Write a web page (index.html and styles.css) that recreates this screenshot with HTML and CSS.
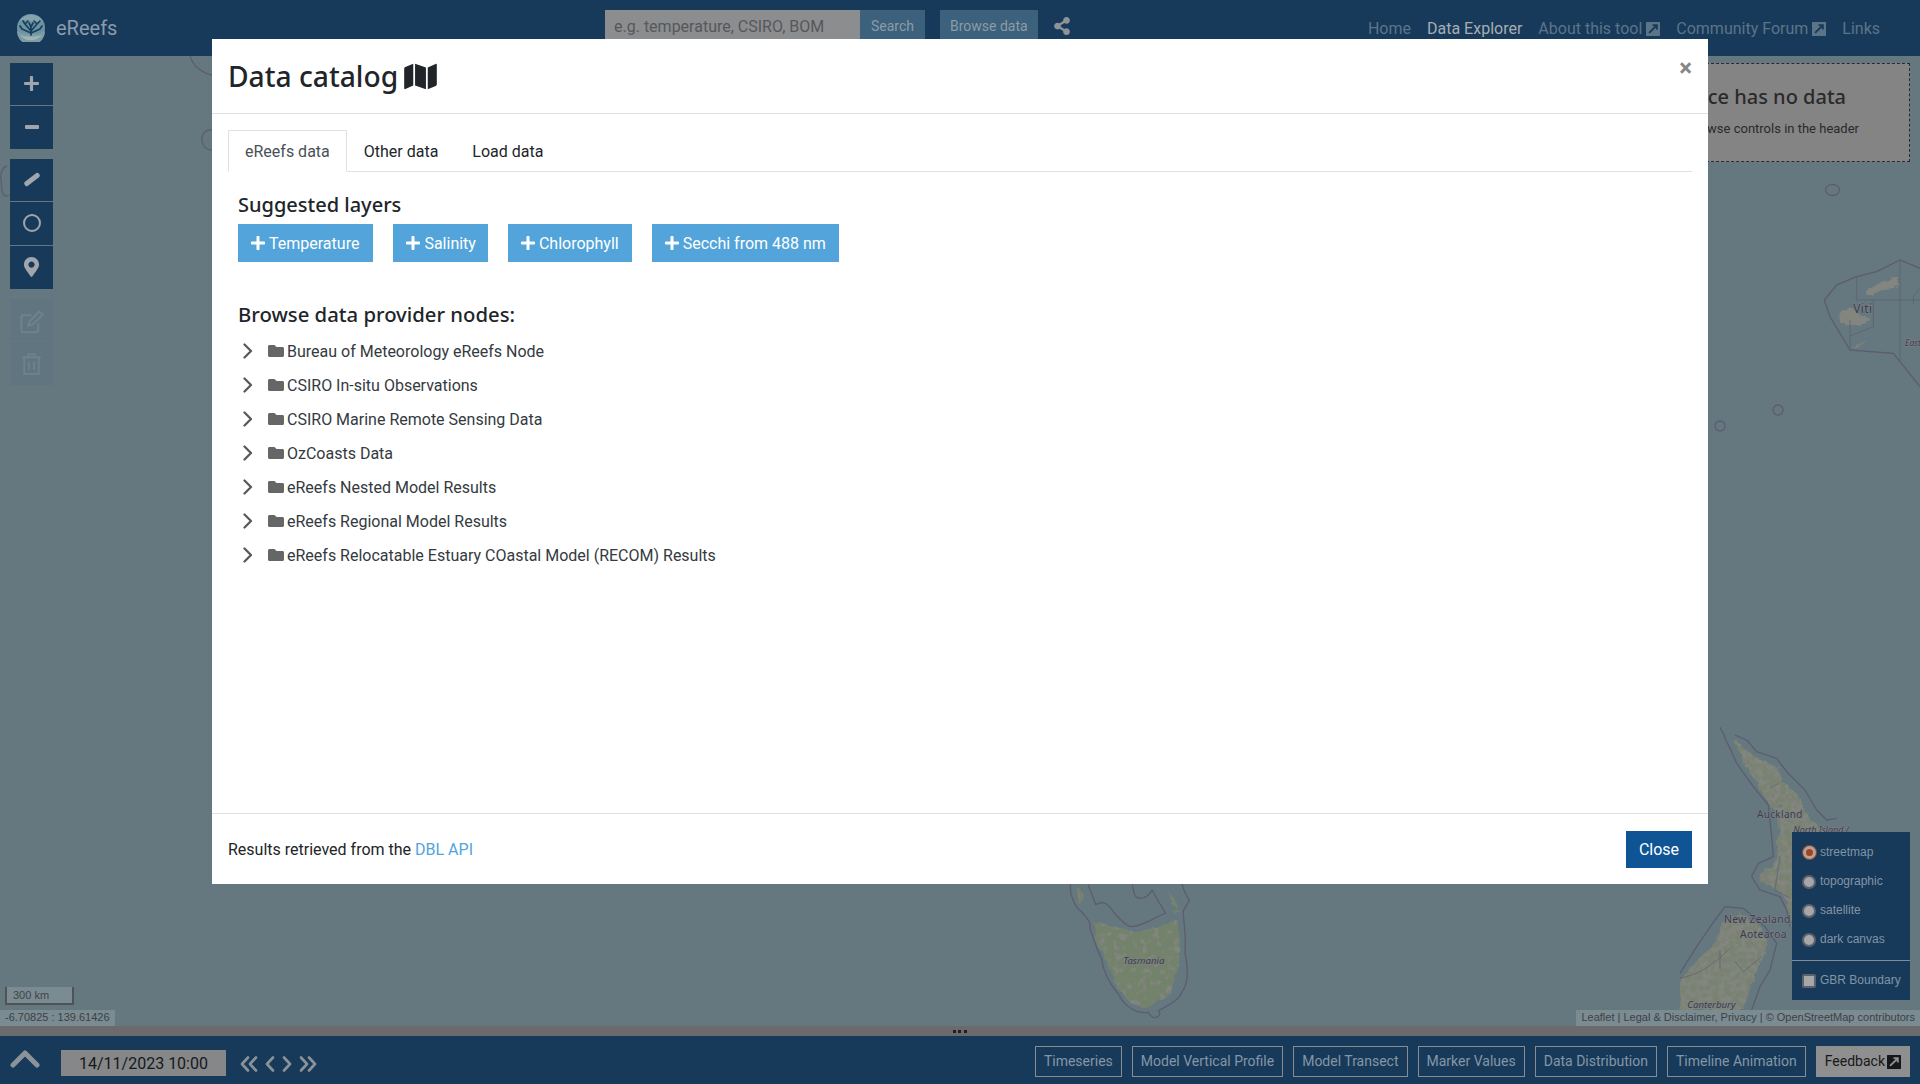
FILE: index.html
```html
<!DOCTYPE html>
<html lang="en">
<head>
<meta charset="utf-8">
<title>eReefs Data Explorer</title>
<link rel="stylesheet" href="styles.css">
</head>
<body>
<svg class="defs" width="0" height="0" aria-hidden="true">
  <symbol id="i-plus" viewBox="0 0 448 512"><path d="M416 208H272V64c0-17.67-14.33-32-32-32h-32c-17.67 0-32 14.33-32 32v144H32c-17.67 0-32 14.33-32 32v32c0 17.67 14.33 32 32 32h144v144c0 17.67 14.33 32 32 32h32c17.67 0 32-14.33 32-32V304h144c17.67 0 32-14.33 32-32v-32c0-17.67-14.33-32-32-32z"/></symbol>
  <symbol id="i-folder" viewBox="0 0 512 512"><path d="M464 128H272l-64-64H48C21.49 64 0 85.49 0 112v288c0 26.51 21.49 48 48 48h416c26.51 0 48-21.49 48-48V176c0-26.51-21.49-48-48-48z"/></symbol>
  <symbol id="i-ext" viewBox="1 1 14 14"><path fill-rule="evenodd" d="M1.500 1h13a.5.5 0 0 1 .5.5v13a.5.5 0 0 1-.5.5h-13a.5.5 0 0 1-.5-.5v-13a.5.5 0 0 1 .5-.5zM7.500 3.200v1.900h2.100L3.400 11.300l1.300 1.300 6.200-6.200v2.100h1.900V3.200z"/></symbol>
  <symbol id="i-chev" viewBox="0 0 12 16"><path d="M2.500 1.500 9 8l-6.500 6.500" fill="none" stroke="currentColor" stroke-width="2.300" stroke-linecap="round" stroke-linejoin="round"/></symbol>
</svg>

<header class="topbar">
  <div class="brand">
    <svg class="logo" viewBox="0 0 28 28">
      <circle cx="14" cy="14" r="14" fill="#6c93a4"/>
      <path d="M2 8c4-3 8-2 12-1s8 1 12 0A14 14 0 0 0 2 8z" fill="#86a4ad"/>
      <path d="M0 17c5 3 9 3 14 3s9 0 14-3a14 14 0 0 1-28 0z" fill="#7d9ca6"/>
      <path d="M3 21c5 2 16 2 22 0a14 14 0 0 1-22 0z" fill="#9fb4b6"/>
      <path d="M14 21v-8M14 17 8 10M14 17l6-7M14 19 5 15M14 19l9-4M8 10 6 7M8 10l3-3M20 10l-3-3M20 10l3-3M14 13l-2-4M14 13l2-4M5 15l-2-3M23 15l2-3" stroke="#173f5c" stroke-width="1.700" fill="none" stroke-linecap="round"/>
    </svg>
    <span class="brand-name">eReefs</span>
  </div>
  <form class="search">
    <div class="search-input">e.g. temperature, CSIRO, BOM</div>
    <div class="search-btn">Search</div>
    <div class="browse-btn">Browse data</div>
    <svg class="share" viewBox="0 0 448 512"><path d="M352 320c-22.608 0-43.387 7.819-59.790 20.895l-102.486-64.054a96.551 96.551 0 0 0 0-41.683l102.486-64.054C308.613 184.181 329.392 192 352 192c53.019 0 96-42.981 96-96S405.019 0 352 0s-96 42.981-96 96c0 7.158.79 14.130 2.276 20.841L155.790 180.895C139.387 167.819 118.608 160 96 160c-53.019 0-96 42.981-96 96s42.981 96 96 96c22.608 0 43.387-7.819 59.790-20.895l102.486 64.054A96.301 96.301 0 0 0 256 416c0 53.019 42.981 96 96 96s96-42.981 96-96-42.981-96-96-96z"/></svg>
  </form>
  <nav class="nav">
    <span class="nav-link">Home</span>
    <span class="nav-link nav-active">Data Explorer</span>
    <span class="nav-link">About this tool <svg class="ext"><use href="#i-ext"/></svg></span>
    <span class="nav-link">Community Forum <svg class="ext"><use href="#i-ext"/></svg></span>
    <span class="nav-link">Links</span>
  </nav>
</header>

<main class="map">
  <svg class="basemap" viewBox="0 0 1920 970" preserveAspectRatio="none">
    <defs>
      <filter id="land" x="-5%" y="-5%" width="110%" height="110%" color-interpolation-filters="sRGB">
        <feTurbulence type="fractalNoise" baseFrequency=".06" numOctaves="3" seed="4" result="n"/>
        <feDisplacementMap in="SourceGraphic" in2="n" scale="16" xChannelSelector="R" yChannelSelector="G" result="s"/>
        <feColorMatrix in="n" type="matrix" values="0 0 0 0 .47 0 0 0 0 .51 0 0 0 0 .44 4 0 0 0 -1.500" result="m"/>
        <feComposite in="m" in2="s" operator="in" result="g"/>
        <feMerge><feMergeNode in="s"/><feMergeNode in="g"/></feMerge>
      </filter>
      <filter id="tas" x="-5%" y="-5%" width="110%" height="110%" color-interpolation-filters="sRGB">
        <feTurbulence type="fractalNoise" baseFrequency=".05" numOctaves="3" seed="9" result="n"/>
        <feDisplacementMap in="SourceGraphic" in2="n" scale="16" xChannelSelector="R" yChannelSelector="G" result="s"/>
        <feColorMatrix in="n" type="matrix" values="0 0 0 0 .45 0 0 0 0 .51 0 0 0 0 .42 6 0 0 0 -1.800" result="m"/>
        <feComposite in="m" in2="s" operator="in" result="g"/>
        <feMerge><feMergeNode in="s"/><feMergeNode in="g"/></feMerge>
      </filter>
      <filter id="rough" x="-5%" y="-5%" width="110%" height="110%" color-interpolation-filters="sRGB">
        <feTurbulence type="fractalNoise" baseFrequency=".08" numOctaves="2" seed="2" result="n"/>
        <feDisplacementMap in="SourceGraphic" in2="n" scale="12" xChannelSelector="R" yChannelSelector="G"/>
      </filter>
    </defs>
    <g transform="translate(0 -56)">
      <path class="b" d="M190 56c3 10 12 17 22 19M212 130c-7-1-11 5-10 11 1 6 5 9 10 9M7 166c-4 1-7 6-6 14s0 12 3 15c2 2 5 0 5 0"/>
      <ellipse class="b" cx="1832.500" cy="190" rx="7" ry="5.500"/>
      <circle class="b" cx="1778" cy="410" r="5"/>
      <circle class="b" cx="1720" cy="426" r="5"/>
      <!-- Viti -->
      <g transform="translate(1700 150) scale(.3333)">
        <g filter="url(#rough)">
          <path class="l" d="M415 500c5-18 25-22 35-28 12 3 18 15 30 24 12 3 28 5 30 15-10 14-40 16-70 14-15-4-25-12-25-25z"/>
          <path class="l" d="M497 422c25-8 30-22 60-28 15-6 28-14 36-14l3 28c-18 6-36 12-44 12-16 2-30 14-44 16-8-2-9-8-11-14z"/>
          <path class="l" d="M462 590c10-2 25-14 36-16-8 8-22 20-36 16z"/>
        </g>
        <path class="bt" d="M660 355 600 330l-70 35-60 15-60 25-37 45 17 50 60 100 130 10 80 100"/>
        <path class="bs" d="M600 330v305M470 380v70h190M520 450v80l-70 28M450 510v90M660 415l-20 25v20"/>
        <text class="place" x="460" y="489" font-size="36">Viti</text>
        <text class="place-i" x="615" y="589" font-size="26">East</text>
      </g>
      <!-- Tasmania -->
      <g transform="translate(1000 860) scale(.3333)">
        <g filter="url(#tas)">
          <path class="l" d="M285 190c30-5 55 15 115 25 45-5 90-15 130-35l10 50-5 90-25 80-70 45-50-15-40-50-30-80-30-50z"/>
          <path class="l" d="M232 82c10-5 15 20 16 38l-8 10c-8-10-12-30-8-48zM505 95l20 25 10 20-20-5zM518 150h28l-20 12z"/>
        </g>
        <path class="bt" d="M212 74c-5 30 15 70 30 78 20 25 30 30 28 55 10 25 20 60 35 90 5 40 20 70 50 105 20 40 55 60 90 55 15 30 45 10 30-5 30-15 65-35 70-55 25-30 15-95 10-120 5-45-5-90-5-125l18-30c-10-20-20-30-25-65M265 74c8 25 20 50 22 60 25-15 40 0 60 30 25 25 40 40 55 35 30-5 60-25 95-40-15-25-30-45-40-70-8 15-25 30-40 25-15 0-15-20-20-40"/>
        <text class="place-i" x="370" y="311" font-size="29">Tasmania</text>
      </g>
      <!-- New Zealand -->
      <g transform="translate(1680 730) scale(.3333)">
        <g filter="url(#land)">
          <path class="l" d="M160 28 205 65l45 30 45 17 10 38 25 25 20 15 30 60 40 50v350l-84-60-16-80-30-30-50-30v-20l35-20 20-30-5-40 10-40-5-40-35-50-35-60-35-50-5-25z"/>
          <path class="l" d="M125 575l55-25 50 30 35 60-10 30-30 60-35 110H0v-90l60-70 50-40z"/>
        </g>
        <path class="bt" d="M120 -8c5 15 15 20 15 33l15 30 20 45 50 70 45 55 10 95 5 60-45 20-20 40 25 40 60 20 20 40 10 50M165 15l35 15 30 35 60 20 30 40 55 55 35 60 30 30 30-5M0 730l50-80 55-80 30-40 55 5 65 55 35 50-20 80-30 50-25 70"/>
        <path class="bs" d="M270 175l25-15M165 695l25 30 55-45M300 380l-15 100 45 25M120 660v55M0 745c40-10 80-20 150-90"/>
        <circle class="b" cx="302" cy="228" r="4"/>
        <text class="place" x="231" y="264" font-size="30">Auckland</text>
        <text class="place-i" x="340" y="308" font-size="27">North Island /</text>
        <text class="place" x="132" y="580" font-size="31">New Zealand</text>
        <text class="place" x="180" y="624" font-size="31">Aotearoa</text>
        <text class="place-i" x="22" y="835" font-size="29">Canterbury</text>
      </g>
    </g>
  </svg>

  <div class="toolbar">
    <div class="tool-group">
      <button class="tool"><svg class="ic-plus"><use href="#i-plus"/></svg></button>
      <button class="tool"><span class="minus"></span></button>
    </div>
    <div class="tool-group">
      <button class="tool"><span class="slash"></span></button>
      <button class="tool"><span class="ring"></span></button>
      <button class="tool">
        <svg class="ic-pin" viewBox="0 0 384 512"><path d="M172.268 501.670C26.970 291.031 0 268.413 0 192 0 85.961 85.961 0 192 0s192 85.961 192 192c0 76.413-26.970 99.031-172.268 309.670-9.535 13.774-29.930 13.773-39.464 0zM192 272c44.183 0 80-35.817 80-80s-35.817-80-80-80-80 35.817-80 80 35.817 80 80 80z"/></svg>
      </button>
    </div>
    <div class="tool-group">
      <button class="tool tool-off">
        <svg class="ic-off ic-edit" viewBox="0 0 24 24"><path d="M18 13v7a1.500 1.500 0 0 1-1.500 1.500h-12A1.500 1.500 0 0 1 3 20V8a1.500 1.500 0 0 1 1.500-1.500H12M10 12.500 19 3l3 3-9.500 9-3.500.5z"/></svg>
      </button>
      <button class="tool tool-off">
        <svg class="ic-off" viewBox="0 0 24 24"><path d="M3 6h18M9 6V3h6v3M5 6v16h14V6M9.500 10v8M14.500 10v8"/></svg>
      </button>
    </div>
  </div>

  <div class="nodata">
    <h3 class="nodata-title">This space has no data</h3>
    <p class="nodata-text">Use the search or browse controls in the header</p>
  </div>

  <div class="scale">300 km</div>
  <div class="coords">-6.70825 : 139.61426</div>
  <div class="attribution">Leaflet | Legal &amp; Disclaimer, Privacy | © OpenStreetMap contributors</div>

  <div class="layers">
    <div class="layer-bases">
      <div class="layer"><span class="radio radio-on"></span>streetmap</div>
      <div class="layer"><span class="radio"></span>topographic</div>
      <div class="layer"><span class="radio"></span>satellite</div>
      <div class="layer"><span class="radio"></span>dark canvas</div>
    </div>
    <div class="layer-over">
      <div class="layer"><span class="check"></span>GBR Boundary</div>
    </div>
  </div>
</main>

<div class="resizer"><span class="grip"></span></div>

<footer class="bottombar">
  <svg class="up" viewBox="0 0 30 18"><path d="M3 15 15 3l12 12" fill="none" stroke="currentColor" stroke-width="5" stroke-linecap="round" stroke-linejoin="round"/></svg>
  <div class="datebox">14/11/2023 10:00</div>
  <div class="steppers">
    <svg class="step-d" viewBox="0 0 18 16"><path d="M8 1.500 2 8l6 6.500M16 1.500 10 8l6 6.500"/></svg>
    <svg class="step-s" viewBox="0 0 10 16"><path d="M8 1.500 2 8l6 6.500"/></svg>
    <svg class="step-s" viewBox="0 0 10 16"><path d="M2 1.500 8 8l-6 6.500"/></svg>
    <svg class="step-d" viewBox="0 0 18 16"><path d="M2 1.500 8 8l-6 6.500M10 1.500 16 8l-6 6.500"/></svg>
  </div>
  <div class="actions">
    <span class="action">Timeseries</span>
    <span class="action">Model Vertical Profile</span>
    <span class="action">Model Transect</span>
    <span class="action">Marker Values</span>
    <span class="action">Data Distribution</span>
    <span class="action">Timeline Animation</span>
    <span class="action action-fill">Feedback <svg class="ext ext-dark"><use href="#i-ext"/></svg></span>
  </div>
</footer>

<div class="modal-layer">
  <section class="modal">
    <div class="modal-head">
      <h2 class="modal-title">Data catalog
        <svg class="ic-map" viewBox="0 0 576 512"><path d="M0 117.660v346.320c0 11.320 11.430 19.060 21.940 14.860L160 416V32L20.120 87.950A32.006 32.006 0 0 0 0 117.660zM192 416l192 64V96L192 32v384zM554.060 33.160L416 96v384l139.880-55.950A31.996 31.996 0 0 0 576 394.340V48.020c0-11.320-11.430-19.060-21.940-14.860z"/></svg>
      </h2>
      <span class="modal-x">×</span>
    </div>
    <div class="modal-body">
      <div class="tabs">
        <span class="tab tab-active">eReefs data</span>
        <span class="tab">Other data</span>
        <span class="tab">Load data</span>
      </div>
      <div class="tab-pane">
        <h4 class="section">Suggested layers</h4>
        <div class="suggest">
          <span class="chip"><svg class="ic-chip"><use href="#i-plus"/></svg>Temperature</span>
          <span class="chip"><svg class="ic-chip"><use href="#i-plus"/></svg>Salinity</span>
          <span class="chip"><svg class="ic-chip"><use href="#i-plus"/></svg>Chlorophyll</span>
          <span class="chip"><svg class="ic-chip"><use href="#i-plus"/></svg>Secchi from 488 nm</span>
        </div>
        <h4 class="section section-browse">Browse data provider nodes:</h4>
        <ul class="tree">
          <li class="node"><svg class="ic-chev"><use href="#i-chev"/></svg><svg class="ic-folder"><use href="#i-folder"/></svg>Bureau of Meteorology eReefs Node</li>
          <li class="node"><svg class="ic-chev"><use href="#i-chev"/></svg><svg class="ic-folder"><use href="#i-folder"/></svg>CSIRO In-situ Observations</li>
          <li class="node"><svg class="ic-chev"><use href="#i-chev"/></svg><svg class="ic-folder"><use href="#i-folder"/></svg>CSIRO Marine Remote Sensing Data</li>
          <li class="node"><svg class="ic-chev"><use href="#i-chev"/></svg><svg class="ic-folder"><use href="#i-folder"/></svg>OzCoasts Data</li>
          <li class="node"><svg class="ic-chev"><use href="#i-chev"/></svg><svg class="ic-folder"><use href="#i-folder"/></svg>eReefs Nested Model Results</li>
          <li class="node"><svg class="ic-chev"><use href="#i-chev"/></svg><svg class="ic-folder"><use href="#i-folder"/></svg>eReefs Regional Model Results</li>
          <li class="node"><svg class="ic-chev"><use href="#i-chev"/></svg><svg class="ic-folder"><use href="#i-folder"/></svg>eReefs Relocatable Estuary COastal Model (RECOM) Results</li>
        </ul>
      </div>
    </div>
    <div class="modal-foot">
      <span class="foot-text">Results retrieved from the <a class="foot-link">DBL API</a></span>
      <span class="close-btn">Close</span>
    </div>
  </section>
</div>
</body>
</html>
```

FILE: styles.css
```css
* { box-sizing: border-box; }
html, body { height: 100%; }
body {
  margin: 0;
  height: 1084px;
  overflow: hidden;
  display: flex;
  flex-direction: column;
  font-family: Roboto, "Liberation Sans", sans-serif;
  font-size: 16px;
  color: #212529;
  background: #65787f;
}
.defs { position: absolute; }

/* Top bar */
.topbar {
  flex: 0 0 56px;
  display: flex;
  align-items: flex-start;
  background: #173a5a;
}
.brand { width: 605px; height: 56px; display: flex; align-items: center; padding-left: 17px; gap: 11px; }
.logo { width: 28px; height: 28px; }
.brand-name { font-size: 20px; color: #8a9bab; }
.search { display: flex; align-items: flex-start; padding-top: 10px; }
.search-input { width: 255px; height: 38px; background: #8c8d8f; color: #55585b; padding: 5px 9px; font-size: 16px; line-height: 24px; }
.search-btn, .browse-btn { height: 38px; background: #3b617c; color: #8c9ba6; font-size: 14px; line-height: 21px; padding: 6px 11px 0; }
.search-btn { width: 65px; }
.browse-btn { margin-left: 15px; width: 98px; padding: 6px 10px 0; }
.share { width: 16px; height: 18px; margin: 7px 0 0 16px; fill: #8d9397; }
.nav { margin-left: auto; padding: 19px 40px 0 0; display: flex; gap: 16px; line-height: 20px; }
.nav-link { color: #5c7488; display: flex; align-items: center; gap: 4px; white-space: nowrap; }
.nav-active { color: #a7adb2; }
.ext { width: 14px; height: 14px; fill: #5c7488; }
.ext-dark { fill: #16191c; }

/* Map */
.map { flex: 1 1 auto; position: relative; overflow: hidden; background: #65787f; }
.basemap { position: absolute; inset: 0; width: 100%; height: 100%; }
.b { fill: none; stroke: #5e5c70; stroke-width: 1.300; }
.bt { fill: none; stroke: #5e5c70; stroke-width: 4; stroke-linejoin: round; }
.bs { fill: none; stroke: #5e5c70; stroke-width: 2; }
.l { fill: #83857f; }
.place, .place-i { fill: #3f3a4c; font-family: "Noto Sans", sans-serif; paint-order: stroke; stroke: #7d8488; stroke-width: 3; }
.place { letter-spacing: 1px; }
.place-i { font-style: italic; }

.toolbar { position: absolute; left: 10px; top: 7px; display: flex; flex-direction: column; gap: 10px; }
.tool-group { display: flex; flex-direction: column; gap: 1px; }
.tool { width: 43px; height: 42px; border: 0; padding: 0 0 2px; background: #173a5a; display: flex; align-items: center; justify-content: center; }
.tool + .tool { height: 43px; }
.ic-plus { width: 15px; height: 17px; fill: #a0a6ab; }
.minus { width: 14px; height: 4px; background: #a0a6ab; border-radius: 1px; }
.slash { width: 18px; height: 5px; background: #a0a6ab; border-radius: 2px; transform: rotate(-38deg); }
.ring { width: 18px; height: 18px; border: 2px solid #a0a6ab; border-radius: 50%; }
.ic-pin { width: 15px; height: 20px; fill: #a0a6ab; }
.tool-off { background: #60757f; padding: 0; }
.ic-off { width: 25px; height: 25px; fill: none; stroke: #6e828a; stroke-width: 1.800; }
.ic-edit { margin-top: 2px; width: 27px; height: 27px; }

.nodata {
  position: absolute;
  top: 7px;
  left: 1500px;
  right: 10px;
  height: 99px;
  padding: 18px 50px 0 0;
  background: #848484;
  border: 1px dashed #2a2a2a;
  text-align: right;
  color: #2a2a2a;
}
.nodata-title { margin: 0; font: 500 20px/30px "Noto Sans", sans-serif; padding-right: 13px; }
.nodata-text { margin: 8px 0 0; font-size: 13px; line-height: 18px; }

.scale {
  position: absolute;
  left: 5px;
  top: 931px;
  width: 69px;
  height: 18px;
  padding-left: 6px;
  font: 11px/17px "Liberation Sans", sans-serif;
  color: #3f4447;
  background: #7a8b92;
  border: 2px solid #505356;
  border-top: 0;
}
.coords, .attribution { position: absolute; bottom: 0; height: 16px; background: #7a8b92; color: #3d4144; font: 11px/15px "Liberation Sans", sans-serif; white-space: nowrap; }
.coords { left: 0; padding: 0 5px; width: 115px; }
.attribution { right: 0; padding: 0 5px; }

.layers { position: absolute; right: 10px; bottom: 26px; width: 118px; background: #173a5a; color: #8294a4; font: 12px/29px "Liberation Sans", sans-serif; }
.layer-bases { padding: 6px 10px 5px; border-bottom: 1px solid #7e8c98; height: 129px; }
.layer-over { height: 39px; padding: 5px 10px 0; }
.layer { display: flex; align-items: center; gap: 4px; height: 29px; white-space: nowrap; }
.radio { width: 14px; height: 14px; border-radius: 50%; border: 2px solid #5e616b; background: #a6a7a8; flex: none; }
.radio-on { background: #a5431f; border: 3px solid #b0a49c; box-shadow: 0 0 0 1px #8e4c34; width: 13px; height: 13px; margin: 0 .5px; }
.check { width: 14px; height: 14px; border: 2px solid #5e616b; background: #a6a7a8; border-radius: 2px; flex: none; }

/* Resize handle */
.resizer { flex: 0 0 10px; background: #6b6b6d; display: flex; justify-content: center; align-items: center; }
.grip { width: 14px; height: 3px; background: repeating-linear-gradient(90deg, #1e1e1e 0 3px, transparent 3px 5.500px); }

/* Bottom bar */
.bottombar { flex: 0 0 48px; background: #173a5a; display: flex; align-items: flex-start; position: relative; }
.up { width: 30px; height: 18px; margin: 14px 0 0 10px; color: #8b9298; }
.datebox { width: 165px; height: 26px; margin: 14px 0 0 21px; background: #858789; color: #16191c; text-align: center; line-height: 28px; font-size: 16px; }
.steppers { display: flex; gap: 7px; margin: 20px 0 0 14px; }
.steppers svg { height: 16px; fill: none; stroke: #8b9298; stroke-width: 2.600; stroke-linecap: round; stroke-linejoin: round; }
.step-d { width: 18px; }
.step-s { width: 10px; }
.actions { margin-left: auto; padding: 10px 10px 0 0; display: flex; gap: 10px; }
.action { height: 31px; border: 1px solid #868c92; color: #8596a5; font-size: 14px; line-height: 29px; padding: 0 8px; display: flex; align-items: center; gap: 4px; white-space: nowrap; }
.action-fill { background: #8f8f8f; border-color: #8f8f8f; color: #16191c; gap: 2px; }
.ext-dark { width: 14px; height: 14px; }

/* Modal */
.modal-layer { position: fixed; inset: 0; padding: 39px 212px 200px 212px; }
.modal { height: 845px; background: #fff; display: flex; flex-direction: column; }
.modal-head { flex: 0 0 75px; border-bottom: 1px solid #dee2e6; padding: 0 16px; display: flex; justify-content: space-between; position: relative; }
.modal-title { margin: 16px 0 0; font: 500 28.200px/42px "Noto Sans", sans-serif; color: #212529; display: flex; align-items: center; gap: 6px; height: 42px; }
.ic-map { width: 33px; height: 29px; fill: #212529; }
.modal-x { font: 700 24px/32px Roboto, sans-serif; color: #868686; margin-top: 13px; }
.modal-body { flex: 1 1 auto; padding: 16px; }
.tabs { display: flex; border-bottom: 1px solid #dee2e6; height: 42px; }
.tab { height: 42px; padding: 0 16px; line-height: 41px; color: #212529; border: 1px solid transparent; }
.tab-active { color: #495057; background: #fff; border-color: #dee2e6 #dee2e6 #fff; }
.tab-pane { padding: 18px 10px 0; }
.section { margin: 0; font: 500 20px/30px "Noto Sans", sans-serif; color: #212529; }
.suggest { display: flex; gap: 20px; margin-top: 4px; }
.chip { height: 38px; background: #52a4da; color: #fff; display: flex; align-items: center; padding: 0 13px; white-space: nowrap; }
.chip:first-child { padding-right: 14px; }
.chip:nth-child(2) { padding-right: 12px; }
.ic-chip { width: 14px; height: 16px; fill: #fff; margin-right: 4px; }
.section-browse { margin-top: 37px; font-size: 20.300px; }
.tree { list-style: none; margin: 5px 0 0; padding: 0; }
.node { height: 34px; display: flex; align-items: center; color: #343a40; }
.ic-chev { width: 12px; height: 16px; margin-left: 4px; color: #5a5a5a; }
.ic-folder { width: 16px; height: 16px; margin: 0 3px 0 14px; fill: #666; }
.modal-foot { flex: 0 0 71px; border-top: 1px solid #dee2e6; padding: 0 16px; display: flex; align-items: center; justify-content: space-between; }
.foot-link { color: #52a4da; }
.close-btn { height: 37px; width: 66px; background: #0f5596; color: #fff; text-align: center; line-height: 37px; }
```
